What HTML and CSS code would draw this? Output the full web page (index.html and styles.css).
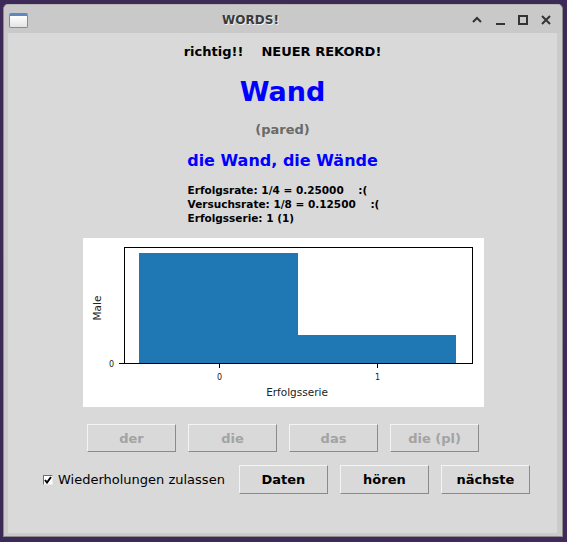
FILE: index.html
```html
<!DOCTYPE html>
<html>
<head>
<meta charset="utf-8">
<link rel="stylesheet" href="styles.css">
</head>
<body>
<div class="window">
  <div class="titlebar">
    <div class="appicon"></div>
    <div class="title">WORDS!</div>
    <div class="controls">
      <svg width="12" height="12" viewBox="0 0 12 12"><path d="M2 8 L6 4 L10 8" fill="none" stroke="#333" stroke-width="2"/></svg>
      <svg width="12" height="12" viewBox="0 0 12 12"><rect x="2" y="9" width="9" height="2" fill="#333"/></svg>
      <svg width="12" height="12" viewBox="0 0 12 12"><rect x="2" y="2" width="8" height="8" fill="none" stroke="#333" stroke-width="2"/></svg>
      <svg width="12" height="12" viewBox="0 0 12 12"><path d="M2 2 L10 10 M10 2 L2 10" fill="none" stroke="#333" stroke-width="2"/></svg>
    </div>
  </div>
  <div class="client">
    <div class="status">richtig!!    NEUER REKORD!</div>
    <div class="word">Wand</div>
    <div class="trans">(pared)</div>
    <div class="forms">die Wand, die Wände</div>
    <div class="stats">Erfolgsrate: 1/4 = 0.25000    :(
Versuchsrate: 1/8 = 0.12500    :(
Erfolgsserie: 1 (1)</div>
    <svg class="chart" width="401" height="169" viewBox="0 0 401 169">
      <rect x="0" y="0" width="401" height="169" fill="#fff"/>
      <rect x="56" y="15" width="159" height="110" fill="#1f77b4"/>
      <rect x="215" y="97" width="158" height="28" fill="#1f77b4"/>
      <rect x="41.5" y="9.5" width="348" height="116" fill="none" stroke="#000" stroke-width="1"/>
      <line x1="36" y1="125.5" x2="41" y2="125.5" stroke="#000" stroke-width="1"/>
      <line x1="136.5" y1="126" x2="136.5" y2="130" stroke="#000" stroke-width="1"/>
      <line x1="294.5" y1="126" x2="294.5" y2="130" stroke="#000" stroke-width="1"/>
      <text class="tick" x="31" y="128.5" text-anchor="end">0</text>
      <text class="tick" x="136.5" y="142" text-anchor="middle">0</text>
      <text class="tick" x="294.5" y="142" text-anchor="middle">1</text>
      <text class="axlabel" x="214" y="157.5" text-anchor="middle">Erfolgsserie</text>
      <text class="axlabel" x="0" y="0" text-anchor="middle" transform="translate(18 70) rotate(-90)">Male</text>
    </svg>
    <div class="row row1">
      <div class="btn disabled">der</div>
      <div class="btn disabled">die</div>
      <div class="btn disabled">das</div>
      <div class="btn disabled">die (pl)</div>
    </div>
    <div class="row row2">
      <label class="check">
        <span class="box"><svg width="8" height="8" viewBox="0 0 8 8"><path d="M1 4 L3 6.5 L7 1" fill="none" stroke="#000" stroke-width="2"/></svg></span>
        <span class="cklabel">Wiederholungen zulassen</span>
      </label>
      <div class="btn">Daten</div>
      <div class="btn">hören</div>
      <div class="btn">nächste</div>
    </div>
  </div>
</div>
</body>
</html>
```

FILE: styles.css
```css
html, body {
  margin: 0;
  padding: 0;
}
body {
  width: 567px;
  height: 542px;
  overflow: hidden;
  background: linear-gradient(135deg, #3e2a58 0%, #3c2b56 60%, #43295c 100%);
  font-family: "DejaVu Sans", sans-serif;
  padding-top: 4px;
  padding-left: 3px;
  box-sizing: border-box;
}
.window {
  width: 560px;
  height: 533px;
  box-sizing: border-box;
  border: 1px solid #8c8c8c;
  border-top-color: #b5b5b5;
  border-radius: 5px 5px 0 0;
  background: #cbcbcb;
  display: flex;
  flex-direction: column;
}
.titlebar {
  height: 28px;
  display: flex;
  align-items: center;
  background: #c9c9c9;
  border-radius: 5px 5px 0 0;
}
.appicon {
  width: 19px;
  height: 15px;
  margin-left: 5px;
  margin-top: 2px;
  box-sizing: border-box;
  border: 1px solid #8a8a8a;
  border-top: 3px solid #5c87c0;
  border-radius: 2px;
  background: linear-gradient(#ffffff, #e3e3e3);
}
.title {
  flex: 1;
  text-align: center;
  font-weight: bold;
  font-size: 12px;
  color: #3a3a3a;
  text-shadow: 1px 1px 0 #f0f0f0;
  padding-top: 2px;
  padding-left: 2px;
}
.controls {
  display: flex;
  gap: 11px;
  margin-right: 10px;
  margin-top: 2px;
}
.controls svg {
  display: block;
}
.client {
  width: 549px;
  height: 500px;
  margin-left: 4px;
  background: #d9d9d9;
  display: flex;
  flex-direction: column;
  align-items: center;
  box-sizing: border-box;
  padding-top: 11px;
}
.status {
  font-size: 13px;
  font-weight: bold;
  line-height: 16px;
  color: #000;
  white-space: pre;
}
.word {
  font-size: 27px;
  font-weight: bold;
  line-height: 34px;
  color: #0000ff;
  margin-top: 15px;
}
.trans {
  font-size: 13px;
  font-weight: bold;
  line-height: 16px;
  color: #6a6a6a;
  margin-top: 13px;
}
.forms {
  font-size: 16px;
  font-weight: bold;
  line-height: 20px;
  color: #0000ff;
  margin-top: 13px;
}
.stats {
  font-size: 10.5px;
  font-weight: bold;
  line-height: 14px;
  white-space: pre;
  color: #000;
  margin-top: 12px;
  margin-left: 2px;
}
.chart {
  display: block;
  margin-top: 13px;
  margin-left: 2px;
}
.tick {
  font-family: "DejaVu Sans", sans-serif;
  font-size: 8px;
  fill: #222;
}
.axlabel {
  font-family: "DejaVu Sans", sans-serif;
  font-size: 10.5px;
  fill: #222;
}
.row {
  display: flex;
  align-items: center;
  gap: 12px;
}
.row1 {
  margin-top: 17px;
  margin-left: 1px;
}
.row2 {
  margin-top: 13px;
  align-self: flex-start;
  margin-left: 35px;
}
.btn {
  width: 89px;
  height: 28px;
  box-sizing: border-box;
  border: 1px solid;
  border-color: #f4f4f4 #8a8a8a #8a8a8a #f4f4f4;
  display: flex;
  align-items: center;
  justify-content: center;
  font-size: 13px;
  font-weight: bold;
  color: #000;
}
.row2 .btn {
  height: 29px;
}
.btn.disabled {
  color: #a3a3a3;
}
.check {
  display: flex;
  align-items: center;
  margin-right: 2px;
}
.box {
  width: 10px;
  height: 10px;
  box-sizing: border-box;
  background: #fff;
  border: 1px solid;
  border-color: #6e6e6e #eaeaea #eaeaea #6e6e6e;
  display: flex;
  align-items: center;
  justify-content: center;
}
.box svg {
  display: block;
}
.cklabel {
  font-size: 13px;
  margin-left: 5px;
  color: #000;
}
```
